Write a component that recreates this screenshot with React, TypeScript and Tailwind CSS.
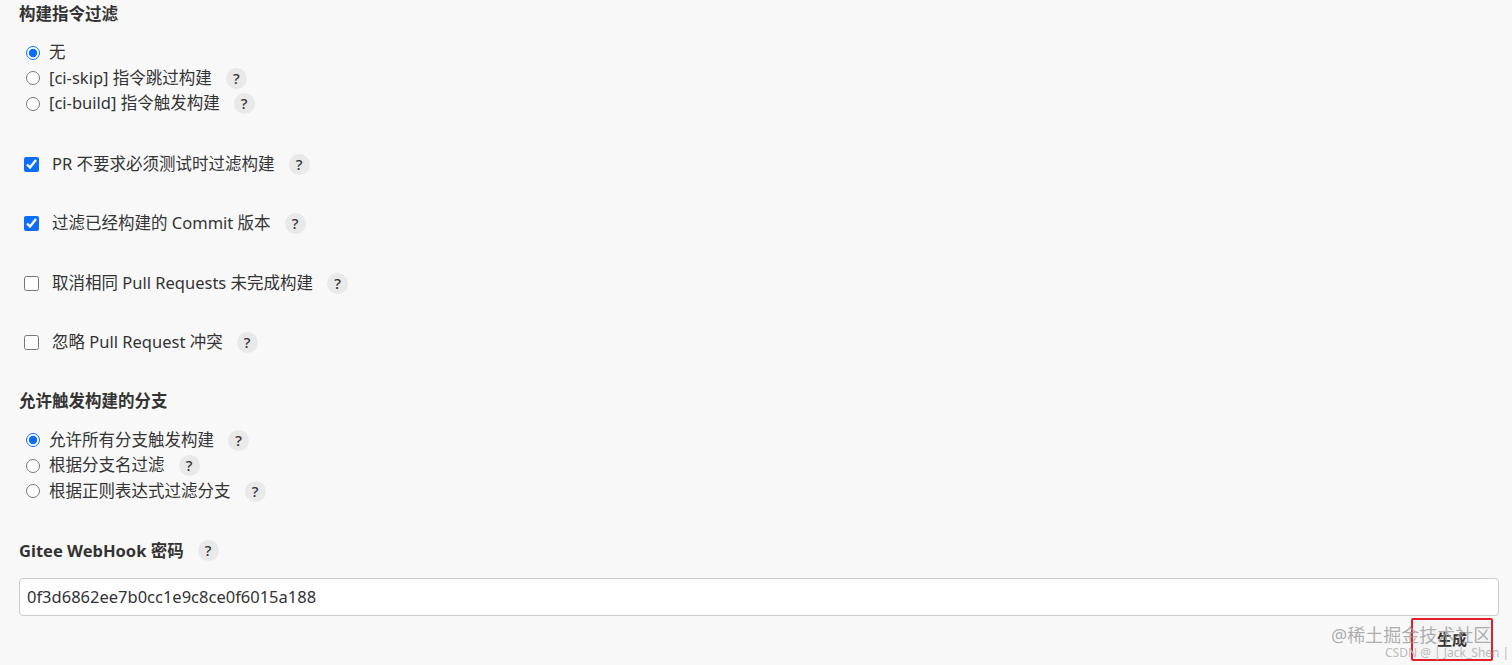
import type { ReactNode } from "react";

function Help() {
  return (
    <span className="ml-[14px] inline-flex h-[21px] w-[21px] items-center justify-center rounded-full bg-[#e9e9e9] text-[15px] font-medium leading-none text-[#333]">
      ?
    </span>
  );
}

function RadioRow({ label, checked, help }: { label: string; checked?: boolean; help?: boolean }) {
  return (
    <label className="flex h-[25.5px] items-center">
      <input
        type="radio"
        defaultChecked={checked}
        className="ml-[7px] mr-[9px] h-[14px] w-[14px] accent-[#0d6efd]"
      />
      <span>{label}</span>
      {help && <Help />}
    </label>
  );
}

function CheckRow({ label, checked }: { label: ReactNode; checked?: boolean }) {
  return (
    <label className="flex h-[24px] items-center">
      <input
        type="checkbox"
        defaultChecked={checked}
        className="ml-[5px] mr-[13px] h-[15px] w-[15px] accent-[#0d6efd]"
      />
      <span>{label}</span>
      <Help />
    </label>
  );
}

export default function App() {
  return (
    <div
      className="relative min-h-[665px] bg-[#f8f8f8] px-[19px] pt-[2px] text-[16.5px] text-[#333]"
      style={{ fontFamily: '"Noto Sans", "Noto Sans CJK SC", sans-serif' }}
    >
      <h2 className="h-[24px] text-[16.5px] font-bold leading-[24px]">构建指令过滤</h2>

      <div className="mt-[14px] flex flex-col">
        <RadioRow label="无" checked />
        <RadioRow label="[ci-skip] 指令跳过构建" help />
        <RadioRow label="[ci-build] 指令触发构建" help />
      </div>

      <div className="mt-[36px] flex flex-col gap-[35.3px]">
        <CheckRow label="PR 不要求必须测试时过滤构建" checked />
        <CheckRow label="过滤已经构建的 Commit 版本" checked />
        <CheckRow label="取消相同 Pull Requests 未完成构建" />
        <CheckRow label="忽略 Pull Request 冲突" />
      </div>

      <h2 className="mt-[35px] h-[24px] text-[16.5px] font-bold leading-[24px]">允许触发构建的分支</h2>

      <div className="mt-[14px] flex flex-col">
        <RadioRow label="允许所有分支触发构建" checked help />
        <RadioRow label="根据分支名过滤" help />
        <RadioRow label="根据正则表达式过滤分支" help />
      </div>

      <div className="mt-[35px] flex h-[24px] items-center">
        <span className="font-bold">Gitee WebHook 密码</span>
        <Help />
      </div>

      <input
        type="text"
        defaultValue="0f3d6862ee7b0cc1e9c8ce0f6015a188"
        className="mt-[15px] block h-[38px] w-[1480px] rounded-[4px] border border-[#ccc] bg-white px-[7px] text-[16.5px] text-[#333] outline-none"
      />

      <div className="mt-[2px] flex justify-end">
        <button className="h-[43px] w-[82px] rounded-[2px] border-2 border-[#e0202a] bg-[#f4f4f4] text-[15px] font-bold text-[#333]">
          生成
        </button>
      </div>

      <div className="pointer-events-none absolute left-[1331px] top-[623px] text-[18px] leading-[24px] text-[#9a9a9a]/80">
        @稀土掘金技术社区
      </div>
      <div className="pointer-events-none absolute left-[1385px] top-[645px] text-[12px] leading-[16px] text-[#bbb]">
        CSDN @ | Jack_Shen |
      </div>
    </div>
  );
}
